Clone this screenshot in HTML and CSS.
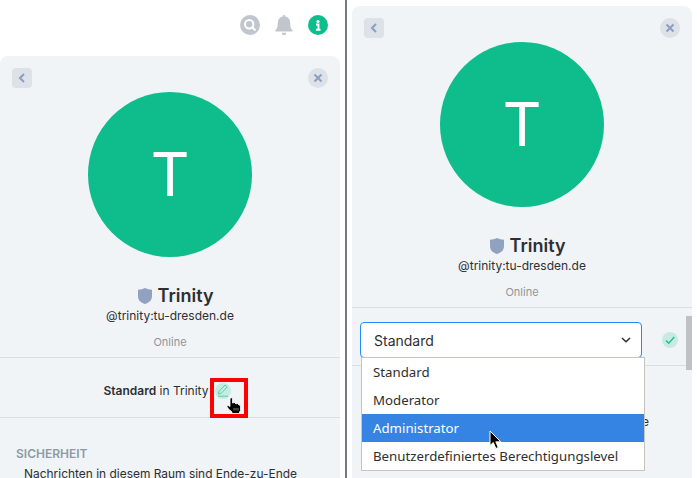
FILE: index.html
```html
<!DOCTYPE html>
<html lang="de">
<head>
<meta charset="utf-8">
<title>Trinity</title>
<link rel="stylesheet" href="styles.css">
</head>
<body>
<div class="screen">
  <section class="view view-left">
    <header class="toolbar">
      <svg class="tool" width="20" height="20" viewBox="0 0 20 20"><circle cx="10" cy="10" r="10" fill="#c1c6cd"/><circle cx="9.200" cy="9.200" r="4.200" fill="none" stroke="#fff" stroke-width="2"/><path d="M12.300 12.300l2.500 2.500" stroke="#fff" stroke-width="2.200" stroke-linecap="round"/></svg>
      <svg class="tool" width="20" height="20" viewBox="0 0 20 20"><path fill="#c1c6cd" d="M10 0c.8 0 1.300.6 1.300 1.400 3.200.8 4.900 3.100 4.900 6.400 0 4.200.5 5.700 2.200 7.200.7.700.4 1.500-.5 1.500H2.100c-.9 0-1.200-.8-.5-1.500 1.700-1.500 2.200-3 2.200-7.200 0-3.300 1.700-5.600 4.900-6.400C8.700.6 9.200 0 10 0zM7.700 17.700h4.600c0 1.400-1 2.300-2.300 2.300s-2.300-.9-2.300-2.300z"/></svg>
      <svg class="tool" width="20" height="20" viewBox="0 0 20 20"><circle cx="10" cy="10" r="10" fill="#0dbd8b"/><circle cx="10" cy="6.500" r="1.600" fill="#fff"/><path d="M8 9.500h2.500v5M8 14.800h4.500" fill="none" stroke="#fff" stroke-width="1.900"/></svg>
    </header>
    <div class="panel">
      <div class="profile">
        <div class="nav">
          <span class="back"><svg width="20" height="20" viewBox="0 0 20 20"><path d="M12 6l-4 4 4 4"/></svg></span>
          <span class="close"><svg width="20" height="20" viewBox="0 0 20 20"><path d="M6.500 6.500l7 7m0-7l-7 7"/></svg></span>
        </div>
        <div class="avatar">T</div>
        <h2 class="name"><svg width="14" height="16" viewBox="0 0 14 16"><path fill="#91a1c0" d="M0 1.700Q4 1.500 7 0q3 1.500 7 1.700V8c0 4.500-3 6.700-7 8-4-1.300-7-3.500-7-8z"/></svg>Trinity</h2>
        <p class="address">@trinity:tu-dresden.de</p>
        <p class="presence">Online</p>
      </div>
      <div class="role">
        <span class="role-text"><b>Standard</b> in Trinity</span>
        <span class="edit">
          <svg class="pencil" width="16" height="16" viewBox="0 0 16 16"><circle cx="8" cy="8" r="8" fill="#c6ebe0"/><path d="M3.500 11l.5-2.700 6-6.300 2.200 2-6 6.300zM3 13.200h10" fill="none" stroke="#58d0ae"/></svg>
          <svg class="hand" width="17" height="17" viewBox="0 0 17 17"><path fill="#000" stroke="#fff" stroke-width=".8" d="M4 1.500Q5.500 0 6.500 1.500V6l2-.5L10 7l1.500-.5L13 8l1.500.5v5l-1 1.500v1.500H6V15l-3.500-3L1 9.500l1-1 2 1z"/><path d="M8 11v2.500m2-2.500v2.500m2-2.500v2.500" stroke="#ddd" stroke-width=".6"/></svg>
        </span>
      </div>
      <div class="security">
        <h3>SICHERHEIT</h3>
        <p>Nachrichten in diesem Raum sind Ende-zu-Ende</p>
      </div>
    </div>
  </section>
  <div class="divider"></div>
  <section class="view view-right">
    <div class="panel">
      <div class="profile">
        <div class="nav">
          <span class="back"><svg width="20" height="20" viewBox="0 0 20 20"><path d="M12 6l-4 4 4 4"/></svg></span>
          <span class="close"><svg width="20" height="20" viewBox="0 0 20 20"><path d="M6.500 6.500l7 7m0-7l-7 7"/></svg></span>
        </div>
        <div class="avatar">T</div>
        <h2 class="name"><svg width="14" height="16" viewBox="0 0 14 16"><path fill="#91a1c0" d="M0 1.700Q4 1.500 7 0q3 1.500 7 1.700V8c0 4.500-3 6.700-7 8-4-1.300-7-3.500-7-8z"/></svg>Trinity</h2>
        <p class="address">@trinity:tu-dresden.de</p>
        <p class="presence">Online</p>
      </div>
      <div class="picker">
        <div class="select">Standard<svg width="10" height="6" viewBox="0 0 10 6"><path d="M1 1l4 3.700L9 1" fill="none" stroke="#2e2f32" stroke-width="1.500"/></svg>
          <ul class="menu">
            <li>Standard</li>
            <li>Moderator</li>
            <li class="active">Administrator</li>
            <li>Benutzerdefiniertes Berechtigungslevel</li>
          </ul>
          <svg class="arrow" width="14" height="20" viewBox="0 0 14 20"><path d="M1 1v14.500l3.300-3 2.500 6 2.500-1-2.500-5.700h5z" fill="#000" stroke="#fff"/></svg>
        </div>
        <svg class="check" width="16" height="16" viewBox="0 0 16 16"><circle cx="8" cy="8" r="8" fill="#c9eae2"/><path d="M4 8.500l2.700 2.700L12.300 5" fill="none" stroke="#1dc392" stroke-width="1.500"/></svg>
      </div>
      <p class="behind">e</p>
      <div class="scrollbar"></div>
    </div>
  </section>
</div>
</body>
</html>
```
FILE: styles.css
```css
*, *::before { box-sizing: border-box; }
body { margin: 0; background: #fff; font-family: Inter, sans-serif; color: #2e2f32; }
h2, h3, p, ul { margin: 0; padding: 0; }
svg { display: block; flex: none; }
.screen { display: flex; width: 697px; height: 478px; overflow: hidden; }
.view { width: 340px; display: flex; flex-direction: column; }
.view-right { padding-top: 6px; }
.divider { width: 2px; margin: 0 5px; background: #737a80; }
.toolbar { height: 56px; flex: none; display: flex; gap: 14px; justify-content: flex-end; padding: 15px 12px 0 0; }
.panel { position: relative; flex: 1; min-height: 0; background: #f0f4f7; border-radius: 8px 8px 0 0; }
.profile { position: relative; height: 302px; padding-top: 36px; border-bottom: 1px solid #d9dee2; text-align: center; }
.nav { position: absolute; top: 12px; left: 12px; right: 12px; display: flex; justify-content: space-between; }
.nav path { fill: none; stroke: #8d9ebf; stroke-width: 2; }
.back, .close { width: 20px; height: 20px; background: #dde1e8; }
.back { border-radius: 4px; }
.close { border-radius: 50%; }
.avatar { width: 164px; height: 165px; margin: 0 auto; border-radius: 50%; background: #0fbd8c; color: #fff; font-size: 60px; font-weight: 370; line-height: 165px; }
.name { display: flex; justify-content: center; align-items: center; gap: 6px; margin-top: 26px; padding-left: 11px; font-size: 18px; font-weight: 600; line-height: 25px; }
.address { font-size: 12px; line-height: 15px; }
.presence { margin-top: 12px; font-size: 11px; line-height: 15px; color: #929599; }
.role { height: 60px; display: flex; justify-content: center; align-items: center; gap: 6px; padding: 7px 6px 0 0; border-bottom: 1px solid #d9dee2; font-size: 12px; }
.role-text { padding-bottom: 2px; }
.role b { font-weight: 600; }
.edit { position: relative; width: 16px; height: 16px; }
.edit::before { content: ""; position: absolute; left: -5px; top: -5px; width: 38px; height: 40px; border: 4px solid #f00; }
.hand { position: absolute; left: 11px; top: 14px; }
.security { padding: 28px 16px 0; }
.security h3 { font-size: 12px; line-height: 16px; font-weight: 600; color: #8d99a5; }
.security p { margin: 4px 0 0 8px; font-size: 11.95px; line-height: 15px; white-space: nowrap; }
.picker { display: flex; align-items: center; gap: 20px; height: 58px; padding: 14px 8px 7px; border-bottom: 1px solid #d9dee2; }
.select { position: relative; width: 282px; height: 36px; display: flex; justify-content: space-between; align-items: center; padding: 0 10px 0 13px; border: 1px solid #238cf5; border-radius: 4px; background: #fff; font-size: 14px; }
.menu { position: absolute; z-index: 1; left: 0; top: 34px; width: 284px; height: 114px; border: 1px solid #c7c4bc; background: #fff; list-style: none; font-family: "Noto Sans", sans-serif; font-size: 13.25px; }
.menu li { height: 28px; line-height: 28px; padding-left: 11px; white-space: nowrap; }
.menu .active { background: #3584e4; color: #fff; }
.arrow { position: absolute; z-index: 2; left: 128px; top: 107px; }
.behind { margin: 48px 0 0 290px; font-size: 12px; line-height: 16px; }
.scrollbar { position: absolute; right: 0; top: 310px; width: 6px; height: 54px; background: #bec2c5; }
```
